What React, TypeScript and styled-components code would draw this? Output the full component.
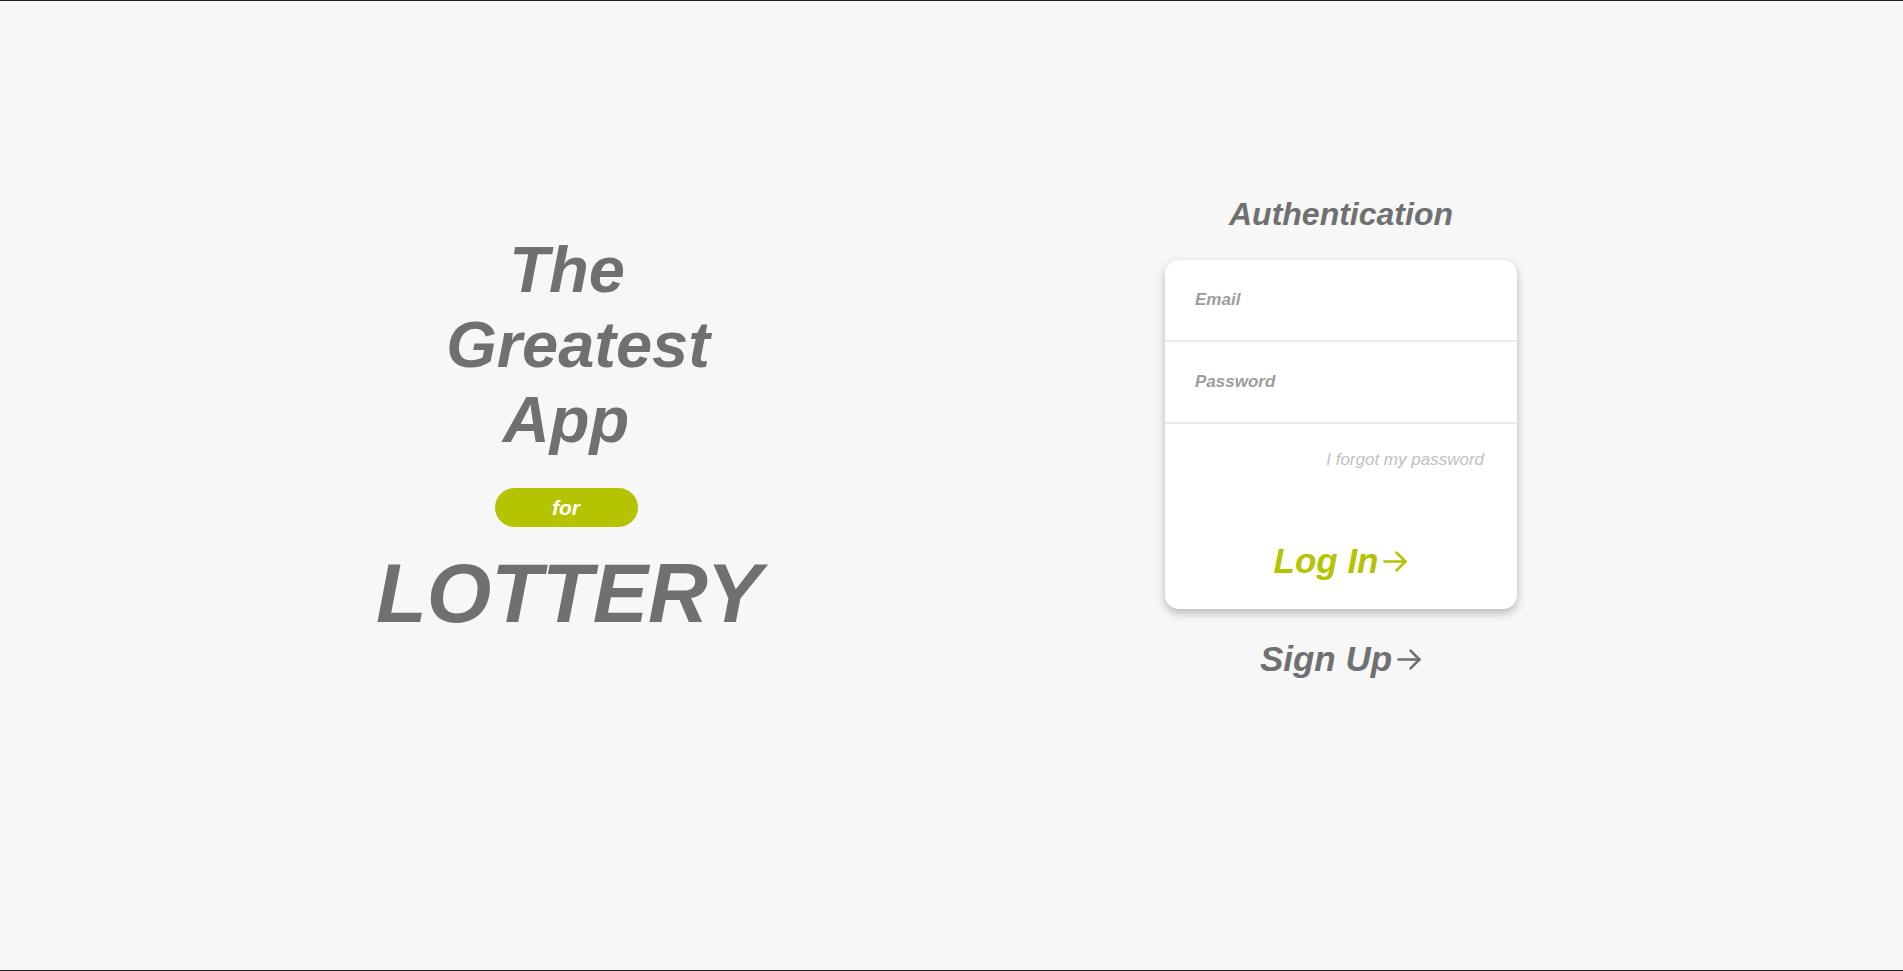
import React from "react";
import styled, { createGlobalStyle } from "styled-components";

const GlobalStyle = createGlobalStyle`
  html, body {
    margin: 0;
    padding: 0;
    background: #f7f7f7;
    font-family: "Liberation Sans", Arial, sans-serif;
  }
  * { box-sizing: border-box; }
`;

const Page = styled.main`
  min-height: 100vh;
  display: flex;
  align-items: center;
  justify-content: center;
  padding: 0 30px 97px 0;
  background: #f7f7f7;
  box-shadow: inset 0 1px 0 #1f1f1f, inset 0 -1px 0 #1f1f1f;
`;

const Row = styled.div`
  display: flex;
  align-items: center;
  gap: 389px;
`;

const Hero = styled.section`
  width: 420px;
  display: flex;
  flex-direction: column;
  align-items: center;
  color: #707070;
  font-style: italic;
  font-weight: 700;
`;

const HeroTitle = styled.h1`
  margin: 0;
  font-size: 65px;
  line-height: normal;
  text-align: center;
  font-weight: 700;
  display: flex;
  flex-direction: column;
  align-items: center;
`;

const HeroLine = styled.span<{ $shift?: number }>`
  display: block;
  padding-left: ${(p) => (p.$shift ?? 0) * 2}px;
`;

const Pill = styled.span`
  margin-top: 31px;
  width: 143px;
  height: 39px;
  border-radius: 20px;
  background: #b5c401;
  color: #ffffff;
  font-size: 21px;
  display: flex;
  align-items: center;
  justify-content: center;
`;

const Big = styled.h2`
  margin: 19px 0 0;
  padding-left: 6px;
  font-size: 83px;
  line-height: normal;
  font-weight: 700;
`;

const Auth = styled.section`
  width: 352px;
  display: flex;
  flex-direction: column;
  align-items: center;
  font-style: italic;
  font-weight: 700;
`;

const AuthTitle = styled.h3`
  margin: 1px 0 27px;
  font-size: 32px;
  line-height: normal;
  color: #707070;
  font-weight: 700;
`;

const Card = styled.form`
  width: 100%;
  background: #ffffff;
  border-radius: 14px;
  box-shadow: 0 4px 10px rgba(0, 0, 0, 0.26);
  display: flex;
  flex-direction: column;
  padding-bottom: 28px;
`;

const Field = styled.input`
  height: 82px;
  border: none;
  border-bottom: 2px solid #ebebeb;
  background: transparent;
  padding: 0 30px;
  font-family: "Liberation Sans", Arial, sans-serif;
  font-size: 17px;
  font-style: italic;
  font-weight: 700;
  color: #707070;
  outline: none;
  &::placeholder {
    color: #9d9d9d;
  }
  &:first-child {
    border-top-left-radius: 14px;
    border-top-right-radius: 14px;
  }
`;

const Forgot = styled.a`
  margin-top: 26px;
  align-self: flex-end;
  padding-right: 33px;
  font-size: 17px;
  font-weight: 400;
  font-style: italic;
  color: #c1c1c1;
  text-decoration: none;
  line-height: normal;
`;

const ActionButton = styled.button<{ $tone: "lime" | "gray" }>`
  display: inline-flex;
  align-items: center;
  gap: 5px;
  border: none;
  background: transparent;
  padding: 0;
  cursor: pointer;
  font-family: "Liberation Sans", Arial, sans-serif;
  font-size: 35px;
  font-style: italic;
  font-weight: 700;
  line-height: normal;
  color: ${(p) => (p.$tone === "lime" ? "#b5c401" : "#707070")};
`;

const LoginButton = styled(ActionButton)`
  margin-top: 71px;
  align-self: center;
`;

const SignUpButton = styled(ActionButton)`
  margin-top: 30px;
`;

const Arrow = () => (
  <svg width="25" height="25" viewBox="0 0 24 24" fill="none" stroke="currentColor" strokeWidth="2.6" strokeLinecap="round" strokeLinejoin="round">
    <path d="M1.5 12h20" />
    <path d="M13 3.5l8.5 8.5-8.5 8.5" />
  </svg>
);

export default function App() {
  return (
    <>
      <GlobalStyle />
      <Page>
        <Row>
          <Hero>
            <HeroTitle>
              <HeroLine $shift={1}>The</HeroLine>
              <HeroLine $shift={12}>Greatest</HeroLine>
              <HeroLine>App</HeroLine>
            </HeroTitle>
            <Pill>for</Pill>
            <Big>LOTTERY</Big>
          </Hero>
          <Auth>
            <AuthTitle>Authentication</AuthTitle>
            <Card onSubmit={(e) => e.preventDefault()}>
              <Field type="email" placeholder="Email" />
              <Field type="password" placeholder="Password" />
              <Forgot href="#">I forgot my password</Forgot>
              <LoginButton type="submit" $tone="lime">
                Log In
                <Arrow />
              </LoginButton>
            </Card>
            <SignUpButton type="button" $tone="gray">
              Sign Up
              <Arrow />
            </SignUpButton>
          </Auth>
        </Row>
      </Page>
    </>
  );
}
